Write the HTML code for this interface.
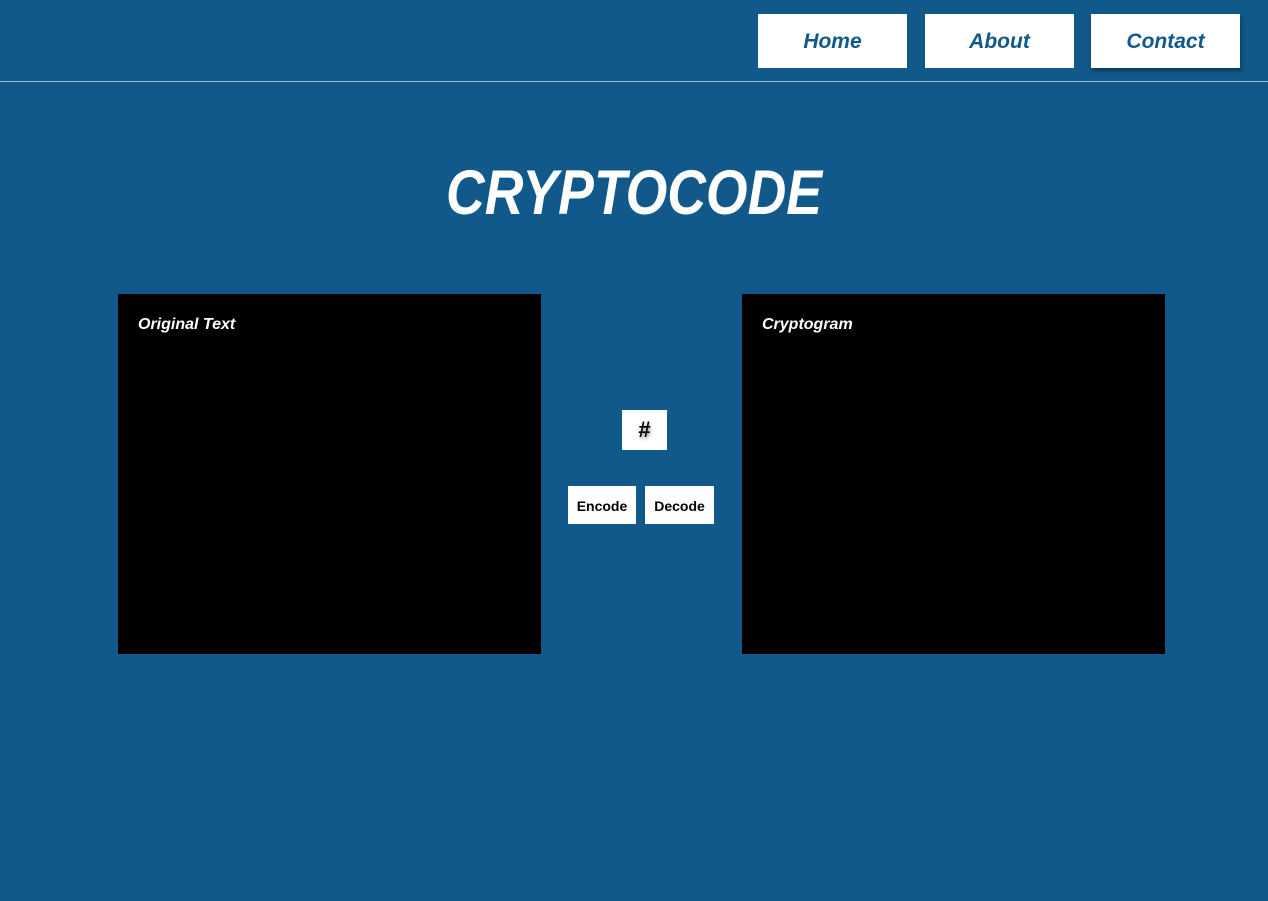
<!DOCTYPE html>
<html><head><style>
body{margin:0;width:1268px;height:901px;background:#11588b;font-family:"Liberation Sans",sans-serif;position:relative;overflow:hidden}
.nav{position:absolute;top:14px;width:149px;height:54px;background:#fff;color:#11588b;font-weight:bold;font-style:italic;font-size:21px;text-align:center;line-height:56px}
.line{position:absolute;top:81px;left:0;width:1268px;height:1px;background:#9fc3de}
h1{position:absolute;top:157px;left:0;width:1268px;margin:0;text-align:center;color:#fff;font-style:italic;font-weight:bold;font-size:63px;line-height:72px;transform:scaleX(0.85)}
.box{position:absolute;top:294px;width:423px;height:360px;background:#000;color:#fff;font-weight:bold;font-style:italic;font-size:16px}
.box span{position:absolute;left:20px;top:22px}
.btn{position:absolute;background:#fff;color:#000;font-weight:bold;text-align:center;font-style:normal}
</style></head><body>
<div class="nav" style="left:758px">Home</div>
<div class="nav" style="left:925px">About</div>
<div class="nav" style="left:1091px;box-shadow:1px 3px 4px rgba(0,0,0,.35)">Contact</div>
<div class="line"></div>
<h1>CRYPTOCODE</h1>
<div class="box" style="left:118px"><span>Original Text</span></div>
<div class="box" style="left:742px"><span>Cryptogram</span></div>
<div class="btn" style="left:622px;top:410px;width:45px;height:40px;line-height:40px;font-size:22px;text-shadow:1px 2px 3px rgba(0,0,0,.4)">#</div>
<div class="btn" style="left:568px;top:486px;width:68px;height:38px;line-height:40px;font-size:14px">Encode</div>
<div class="btn" style="left:645px;top:486px;width:69px;height:38px;line-height:40px;font-size:14px">Decode</div>
</body></html>
